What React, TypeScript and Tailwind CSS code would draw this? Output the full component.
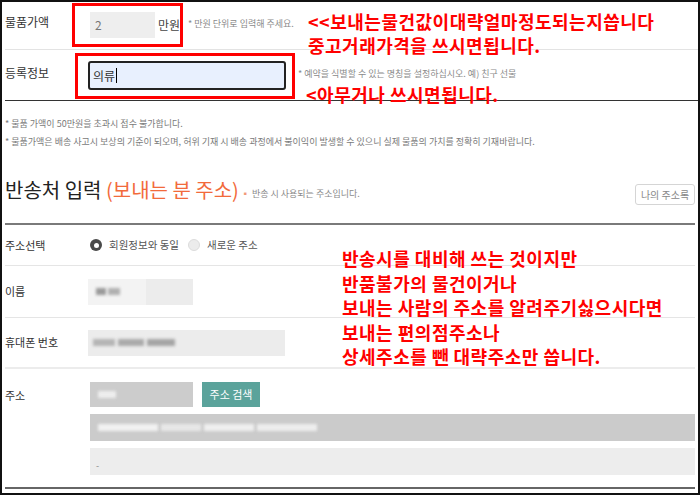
import { useState } from 'react'

function Radio({ checked, label }: { checked: boolean; label: string }) {
  return (
    <label className="flex items-center gap-[7px] text-[10.5px] text-[#555]">
      {checked ? (
        <span className="flex h-[12px] w-[12px] items-center justify-center rounded-full bg-[#4a4a4a]">
          <span className="h-[5px] w-[5px] rounded-full bg-white" />
        </span>
      ) : (
        <span className="h-[12px] w-[12px] rounded-full border border-[#dcdcdc] bg-[#ececec]" />
      )}
      {label}
    </label>
  )
}

// pixelated placeholder for the hidden personal data
function Mosaic({ w, shade = 'bg-[#9a9a9a]' }: { w: number; shade?: string }) {
  return <span className={`block h-[7px] blur-[1.5px] ${shade}`} style={{ width: w }} />
}

export default function App() {
  const [name] = useState('의류')

  return (
    <div className="relative h-[495px] w-[700px] overflow-hidden border-2 border-[#111] bg-white font-['Noto_Sans_CJK_KR','Noto_Sans',sans-serif] text-[#333]">
      <div className="pl-[3px]">
        {/* 물품가액 */}
        <div className="flex h-[48px] items-start border-b border-[#e3e3e3]">
          <div className="w-[67px] pt-[11px] text-[12px]">물품가액</div>
          <div className="mt-[1px] flex h-[44px] w-[111px] shrink-0 items-center border-[3px] border-[#ff0000] pl-[15px]">
            <div className="flex h-[26px] w-[65px] shrink-0 items-center bg-[#eeeeee] pl-[5px] text-[12px] text-[#777]">2</div>
            <span className="ml-[3px] whitespace-nowrap text-[12px] text-[#444]">만원</span>
          </div>
          <span className="ml-[5px] whitespace-nowrap pt-[15px] text-[9px] text-[#8a8a8a]">* 만원 단위로 입력해 주세요.</span>
        </div>

        {/* 등록정보 */}
        <div className="flex h-[51px] items-start border-b border-[#333]">
          <div className="w-[70px] pt-[14px] text-[12px]">등록정보</div>
          <div className="mt-[3px] h-[46px] w-[220px] shrink-0 border-[3px] border-[#ff0000] pl-[10px] pt-[5px]">
            <div className="flex h-[29px] w-[198px] items-center rounded-[3px] border-2 border-[#222] bg-[#e8f0fe] pl-[3px] text-[12px] text-[#333]">
              {name}
              <span className="ml-[1px] h-[15px] w-[1px] bg-black" />
            </div>
          </div>
          <span className="ml-[3px] whitespace-nowrap pt-[17px] text-[9px] text-[#8a8a8a]">
            * 예약을 식별할 수 있는 명칭을 설정하십시오. 예) 친구 선물
          </span>
        </div>

        {/* notes */}
        <div className="pt-[14px] text-[9px] leading-[18px] text-[#7a7a7a]">
          <p>* 물품 가액이 50만원을 초과시 접수 불가합니다.</p>
          <p>* 물품가액은 배송 사고시 보상의 기준이 되오며, 허위 기재 시 배송 과정에서 불이익이 발생할 수 있으니 실제 물품의 가치를 정확히 기재바랍니다.</p>
        </div>

        {/* 반송처 입력 */}
        <div className="mr-[3px] mt-[24px] flex h-[30px] items-center">
          <h2 className="text-[20px] leading-[30px] text-[#222]">
            반송처 입력 <span className="text-[#f26a3b]">(보내는 분 주소)</span>
          </h2>
          <span className="ml-[2px] mt-[8px] text-[9px] text-[#8a8a8a]">
            <span className="text-[#f29a7a]">▪</span> 반송 시 사용되는 주소입니다.
          </span>
          <button className="ml-auto mt-[8px] h-[21px] w-[60px] rounded-[3px] border border-[#d5d5d5] text-[10px] text-[#888]">
            나의 주소록
          </button>
        </div>

        <div className="mr-[3px] mt-[18px]">
          <div className="h-[2px] bg-[#7a7a7a]" />

          <div className="flex h-[41px] items-center border-b border-[#e5e5e5]">
            <div className="w-[85px] text-[11px]">주소선택</div>
            <div className="flex items-center gap-[9px]">
              <Radio checked label="회원정보와 동일" />
              <Radio checked={false} label="새로운 주소" />
            </div>
          </div>

          <div className="flex h-[52px] items-center border-b border-[#e5e5e5]">
            <div className="w-[83px] text-[11px]">이름</div>
            <div className="flex h-[26px] w-[105px] items-center bg-[#ececec]">
              <div className="flex h-full w-[58px] items-center gap-[2px] bg-[#f3f3f3] pl-[8px]">
                <Mosaic w={10} />
                <Mosaic w={12} shade="bg-[#b0b0b0]" />
              </div>
            </div>
          </div>

          <div className="flex h-[51px] items-center border-b-2 border-[#ececec]">
            <div className="w-[83px] text-[11px]">휴대폰 번호</div>
            <div className="flex h-[26px] w-[197px] items-center gap-[3px] bg-[#ececec] pl-[5px]">
              <Mosaic w={22} shade="bg-[#b5b5b5]" />
              <Mosaic w={26} shade="bg-[#aaaaaa]" />
              <Mosaic w={28} shade="bg-[#a5a5a5]" />
            </div>
          </div>

          <div className="flex border-b-2 border-[#666] pb-[12px] pt-[13px]">
            <div className="w-[85px] pt-[5px] text-[11px]">주소</div>
            <div className="flex flex-1 flex-col gap-[7px]">
              <div className="flex gap-[9px]">
                <div className="flex h-[25px] w-[103px] items-center bg-[#cccccc] pl-[8px]">
                  <Mosaic w={18} shade="bg-[#eeeeee]" />
                </div>
                <button className="h-[25px] w-[58px] bg-[#5ba39b] text-[11px] text-white">주소 검색</button>
              </div>
              <div className="flex h-[27px] items-center gap-[3px] bg-[#cbcbcb] pl-[8px]">
                <Mosaic w={60} shade="bg-[#f2f2f2]" />
                <Mosaic w={40} shade="bg-[#e8e8e8]" />
                <Mosaic w={50} shade="bg-[#f0f0f0]" />
                <Mosaic w={60} shade="bg-[#eeeeee]" />
              </div>
              <div className="flex h-[27px] items-center bg-[#ededed] pl-[6px] pt-[8px] text-[9px] text-[#888]">-</div>
            </div>
          </div>
        </div>
      </div>

      {/* annotations */}
      <div className="absolute left-[306px] top-[7px] whitespace-nowrap text-[18px] font-bold leading-[24px] tracking-[0.5px] text-[#ff0000]">
        <p>{'<<보내는물건값이대략얼마정도되는지씁니다'}</p>
        <p>중고거래가격을 쓰시면됩니다.</p>
      </div>
      <div className="absolute left-[304px] top-[80px] whitespace-nowrap text-[18px] font-bold leading-[24px] tracking-[0.5px] text-[#ff0000]">
        {'<아무거나 쓰시면됩니다.'}
      </div>
      <div className="absolute left-[340px] top-[244px] whitespace-nowrap text-[18px] font-bold leading-[24.5px] tracking-[0.5px] text-[#ff0000]">
        <p>반송시를 대비해 쓰는 것이지만</p>
        <p>반품불가의 물건이거나</p>
        <p>보내는 사람의 주소를 알려주기싫으시다면</p>
        <p>보내는 편의점주소나</p>
        <p>상세주소를 뺀 대략주소만 씁니다.</p>
      </div>
    </div>
  )
}
